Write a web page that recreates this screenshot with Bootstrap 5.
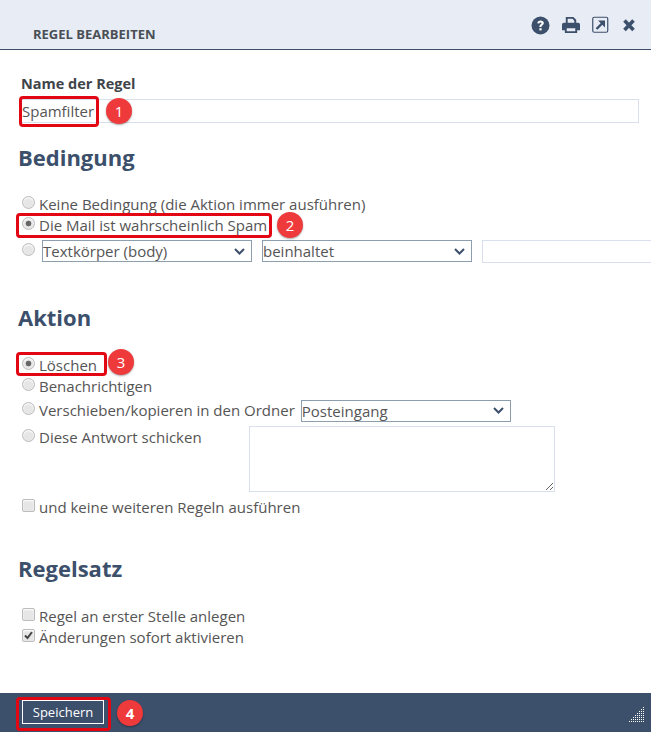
<!DOCTYPE html>
<html lang="de">
<head>
  <meta charset="UTF-8" />
  <meta name="viewport" content="width=device-width, initial-scale=1.0" />
  <title>Regel bearbeiten</title>
  <link href="https://cdn.jsdelivr.net/npm/bootstrap@5.3.0/dist/css/bootstrap.min.css" rel="stylesheet" />
  <style>
    html, body { height: 732px; overflow: hidden; }
    body { font-family: "Open Sans", "Liberation Sans", sans-serif; font-size: 15px; line-height: 21px; color: #555; background: #fff; position: relative; }
    .dlg-head { height: 50px; flex: none; background: #e8edf5; border-bottom: 1px solid #3c4f6b; padding: 0 16px 0 33px; }
    .dlg-title { font-size: 13px; font-weight: 700; color: #4a4f55; line-height: 16px; padding-top: 26px; }
    .dlg-icons { padding-top: 16px; gap: 12px; }
    .dlg-body { flex: 1 1 auto; padding: 24px 0 0 18px; overflow: hidden; }
    .name-label { font-weight: 700; color: #3f444a; font-size: 14.5px; padding-left: 3px; line-height: 20px; margin-bottom: 5px; }
    .name-input { width: 619px; height: 24px; margin-left: 2px; padding: 0 1px; border: 1px solid #d8e0ee; font-size: 15px; color: #555; display: block; outline: 0; }
    .sect-title { font-size: 22px; font-weight: 700; color: #3c4f6b; line-height: 30px; margin: 0; }
    .opt-row { display: flex; align-items: center; height: 21px; padding-left: 4px; white-space: nowrap; }
    .opt-row .form-check-input { width: 13px; height: 13px; margin: -4px 4px 0 0; flex: none; border: 1px solid #bcbcbc; background-color: #e6e6e6; background-image: none; box-shadow: inset 0 1px 2px #fff; }
    .opt-row .form-check-input:checked[type=radio] { background-color: #e6e6e6; border-color: #bcbcbc; background-image: radial-gradient(circle, #666 0, #666 2.5px, transparent 3.2px); }
    .opt-row .form-check-input[type=checkbox] { border-radius: 2px; }
    .opt-row .form-check-input:checked[type=checkbox] { background-color: #e6e6e6; border-color: #bcbcbc; background-size: 13px 13px; background-image: url("data:image/svg+xml,%3csvg xmlns='http://www.w3.org/2000/svg' viewBox='0 0 13 13'%3e%3cpath fill='none' stroke='%23444' stroke-width='2' d='M3 6.5l2.5 2.5 4.5-6'/%3e%3c/svg%3e"); }
    .opt-sel { width: 210px; height: 22px; padding: 0; border: 1px solid #8d9fae; border-radius: 0; font-size: 15px; line-height: 20px; color: #555; background-position: right 6px center; background-size: 11px 7px; background-image: url("data:image/svg+xml,%3csvg xmlns='http://www.w3.org/2000/svg' viewBox='0 0 11 7'%3e%3cpath fill='none' stroke='%233c4f6b' stroke-width='2' d='M1 1l4.5 4.5L10 1'/%3e%3c/svg%3e"); flex: none; }
    .opt-sel-cond { margin-left: 3px; margin-right: 10px; }
    .opt-sel-move { margin-left: 6px; }
    .opt-text { width: 200px; height: 23px; border: 1px solid #d8e0ee; flex: none; margin-left: 10px; }
    .opt-area { width: 306px; height: 66px; border: 1px solid #d8e0ee; border-radius: 0; display: block; margin-left: 231px; margin-top: -24px; outline: 0; }
    .dlg-foot { height: 39px; background: #3c4f6b; position: relative; padding: 7px 0 0 22px; flex: none; }
    .save-btn { width: 82px; height: 24px; padding: 0; border: 1px solid #fff; border-radius: 0; background: transparent; color: #fff; font-size: 13px; line-height: 20px; }
    .grip { position: absolute; right: 6px; bottom: 9px; }
    .mt-title-a { margin-top: 19px; }
    .opt-first-a { margin-top: 22px; }
    .opt-sels { height: 26px; margin-top: 2px; }
    .mt-title-b { margin-top: 38px; }
    .opt-first-b { margin-top: 23px; }
    .opt-move { height: 25px; margin-top: 1px; }
    .opt-reply { height: 26px; margin-top: 1px; }
    .opt-stop { margin-top: 5px; }
    .mt-title-c { margin-top: 35px; }
    .opt-first-c { margin-top: 23px; }
    .mark-box { position: absolute; border: 3px solid #e30613; border-radius: 4px; }
    .mark-num { position: absolute; width: 26px; height: 26px; border-radius: 50%; background: #ef3a3c; color: #fff; font-size: 15px; line-height: 26px; text-align: center; box-shadow: 0 1px 2px rgba(0,0,0,.35); }
    .mark-a { left: 19px; top: 96px; width: 80px; height: 31px; }
    .num-a { left: 106px; top: 98px; }
    .mark-b { left: 16px; top: 213px; width: 256px; height: 25px; }
    .num-b { left: 277px; top: 212px; }
    .mark-c { left: 16px; top: 352px; width: 91px; height: 24px; }
    .num-c { left: 108px; top: 349px; }
    .mark-d { left: 16px; top: 697px; width: 95px; height: 34px; }
    .num-d { left: 117px; top: 700px; }
  </style>
</head>
<body>
  <div class="d-flex flex-column h-100">
    <div class="dlg-head d-flex justify-content-between">
      <div class="dlg-title">REGEL BEARBEITEN</div>
      <div class="dlg-icons d-flex align-items-start">
        <svg width="19" height="19" viewBox="0 0 19 19"><circle cx="9.5" cy="9.5" r="9" fill="#3c4f6b"/><path d="M6.3 7.3c.2-1.8 1.5-2.7 3.3-2.7 1.9 0 3.2 1 3.2 2.5 0 2.2-2.3 2-2.3 3.8H8.4c0-2.6 2.1-2.6 2.1-3.7 0-.5-.4-.8-1-.8-.7 0-1 .4-1.2 1.1z" fill="#fff"/><rect x="8.4" y="12.2" width="2.2" height="2.2" fill="#fff"/></svg>
        <svg width="18" height="18" viewBox="0 0 19 19" fill="#3c4f6b"><path d="M4 1h8l3 3v4h-2V5l-2-2H6v5H4z"/><path fill-rule="evenodd" d="M2 7h15a2 2 0 0 1 2 2v6h-3v3H3v-3H0V9a2 2 0 0 1 2-2zm3 6v3h9v-3z"/></svg>
        <svg width="17" height="17" viewBox="0 0 17 17" fill="none" stroke="#3c4f6b"><rect x=".75" y="1.25" width="15" height="15" rx="1.5" stroke-width="1.2"/><path d="M4.5 13l6.5-6.5" stroke-width="2.4"/><path d="M6 4.5h7v7z" fill="#3c4f6b" stroke="none"/></svg>
        <svg width="14" height="19" viewBox="0 0 14 19"><path d="M3.5 4.5l9 9.5M12.5 4.5l-9 9.5" stroke="#3c4f6b" stroke-width="3.6" fill="none"/></svg>
      </div>
    </div>

    <form class="dlg-body">
      <div class="name-label">Name der Regel</div>
      <input type="text" class="name-input" value="Spamfilter" />

      <h2 class="sect-title mt-title-a">Bedingung</h2>
      <div class="opt-row opt-first-a"><input class="form-check-input" type="radio" name="cond" /><span>Keine Bedingung (die Aktion immer ausführen)</span></div>
      <div class="opt-row"><input class="form-check-input" type="radio" name="cond" checked /><span>Die Mail ist wahrscheinlich Spam</span></div>
      <div class="opt-row opt-sels">
        <input class="form-check-input" type="radio" name="cond" />
        <select class="form-select opt-sel opt-sel-cond"><option>Textkörper (body)</option></select>
        <select class="form-select opt-sel"><option>beinhaltet</option></select>
        <input type="text" class="opt-text" />
      </div>

      <h2 class="sect-title mt-title-b">Aktion</h2>
      <div class="opt-row opt-first-b"><input class="form-check-input" type="radio" name="act" checked /><span>Löschen</span></div>
      <div class="opt-row"><input class="form-check-input" type="radio" name="act" /><span>Benachrichtigen</span></div>
      <div class="opt-row opt-move"><input class="form-check-input" type="radio" name="act" /><span>Verschieben/kopieren in den Ordner</span><select class="form-select opt-sel opt-sel-move"><option>Posteingang</option></select></div>
      <div class="opt-row opt-reply"><input class="form-check-input" type="radio" name="act" /><span>Diese Antwort schicken</span></div>
      <textarea class="opt-area"></textarea>
      <div class="opt-row opt-stop"><input class="form-check-input" type="checkbox" /><span>und keine weiteren Regeln ausführen</span></div>

      <h2 class="sect-title mt-title-c">Regelsatz</h2>
      <div class="opt-row opt-first-c"><input class="form-check-input" type="checkbox" /><span>Regel an erster Stelle anlegen</span></div>
      <div class="opt-row"><input class="form-check-input" type="checkbox" checked /><span>Änderungen sofort aktivieren</span></div>
    </form>

    <div class="dlg-foot">
      <button type="button" class="btn save-btn">Speichern</button>
      <svg class="grip" width="17" height="17" viewBox="0 0 17 17" fill="#fff"><path d="M15 1h1v1h-1zM13 3h1v1h-1zM15 3h1v1h-1zM11 5h1v1h-1zM13 5h1v1h-1zM15 5h1v1h-1zM9 7h1v1H9zM11 7h1v1h-1zM13 7h1v1h-1zM15 7h1v1h-1zM7 9h1v1H7zM9 9h1v1H9zM11 9h1v1h-1zM13 9h1v1h-1zM15 9h1v1h-1zM5 11h1v1H5zM7 11h1v1H7zM9 11h1v1H9zM11 11h1v1h-1zM13 11h1v1h-1zM15 11h1v1h-1zM3 13h1v1H3zM5 13h1v1H5zM7 13h1v1H7zM9 13h1v1H9zM11 13h1v1h-1zM13 13h1v1h-1zM15 13h1v1h-1zM1 15h1v1H1zM3 15h1v1H3zM5 15h1v1H5zM7 15h1v1H7zM9 15h1v1H9zM11 15h1v1h-1zM13 15h1v1h-1zM15 15h1v1h-1z"/></svg>
    </div>
  </div>

  <div class="mark-box mark-a"></div><div class="mark-num num-a">1</div>
  <div class="mark-box mark-b"></div><div class="mark-num num-b">2</div>
  <div class="mark-box mark-c"></div><div class="mark-num num-c">3</div>
  <div class="mark-box mark-d"></div><div class="mark-num num-d fw-bold">4</div>
</body>
</html>
